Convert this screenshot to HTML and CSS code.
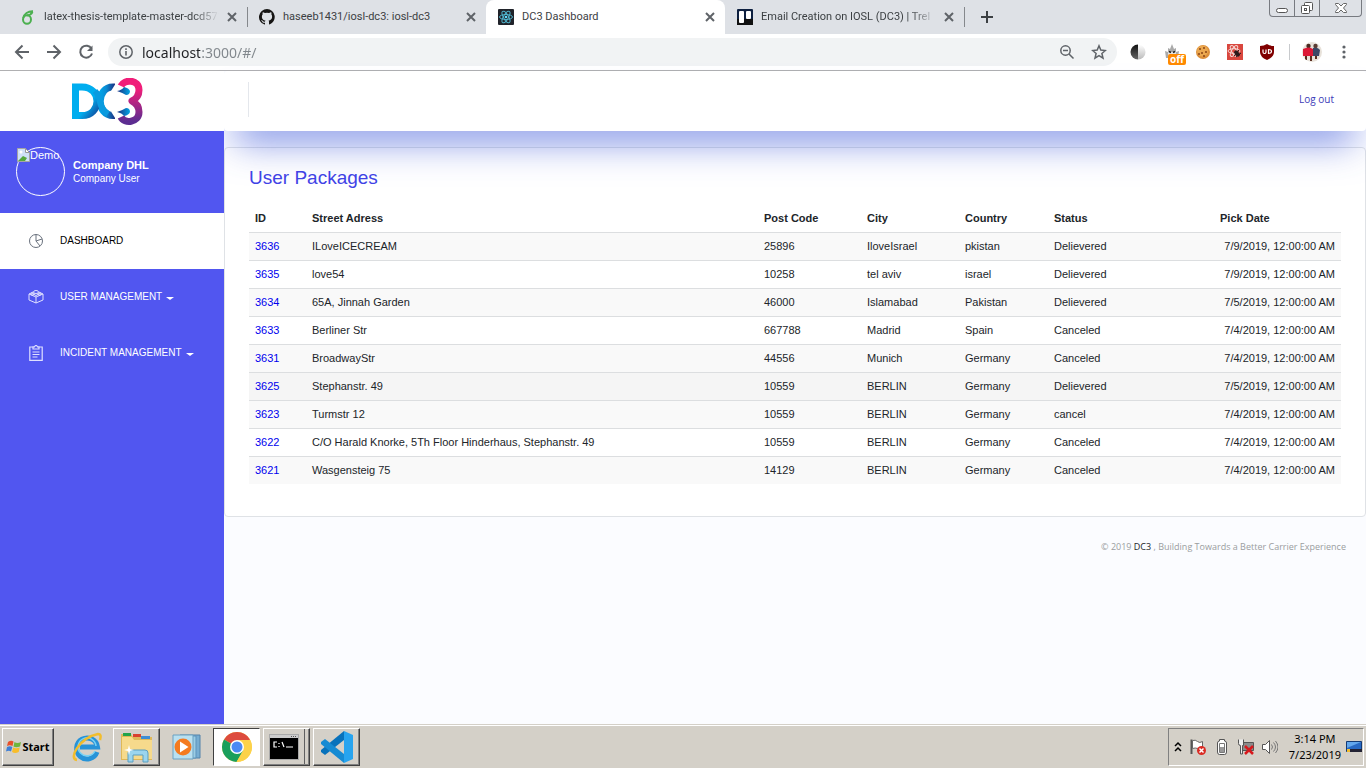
FILE: index.html
```
<!DOCTYPE html>
<html lang="en">
<head>
<meta charset="utf-8">
<title>DC3 Dashboard</title>
<link rel="stylesheet" href="styles.css">
</head>
<body>
<header class="browser">
  <div class="tabstrip">
    <div class="tab">
      <svg class="fav" viewBox="0 0 16 16" fill="none" stroke="#4cb050" stroke-width="2"><ellipse cx="7" cy="10.500" rx="4" ry="4.200"/><path d="M3.300 9C4 5 8 2 13 2.200M7 6.200Q10.500 6.500 12.500 3"/></svg>
      <span class="tab-title fade">latex-thesis-template-master-dcd571</span>
      <button class="close" aria-label="Close tab"><svg viewBox="0 0 10 10"><path d="M1 1l8 8M9 1l-8 8"/></svg></button>
    </div>
    <div class="tab sep-left">
      <svg class="fav" viewBox="0 0 16 16"><path fill="#161514" d="M8 0a8 8 0 0 0-2.500 15.600c.4.100.5-.2.500-.4v-1.500c-2.200.5-2.700-1-2.700-1-.4-.9-.9-1.200-.9-1.200-.7-.5.100-.5.100-.5.800.1 1.200.8 1.200.8.700 1.300 1.900.9 2.300.7.100-.5.300-.9.500-1.100-1.800-.2-3.600-.9-3.600-4 0-.9.300-1.600.8-2.100-.1-.2-.4-1 .1-2.100 0 0 .7-.2 2.200.8a7.600 7.600 0 0 1 4 0c1.500-1 2.200-.8 2.200-.8.500 1.100.2 1.900.1 2.100.5.600.8 1.300.8 2.100 0 3.100-1.900 3.800-3.600 4 .3.300.5.700.5 1.500v2.200c0 .2.100.5.500.4A8 8 0 0 0 8 0z"/></svg>
      <span class="tab-title">haseeb1431/iosl-dc3: iosl-dc3</span>
      <button class="close" aria-label="Close tab"><svg viewBox="0 0 10 10"><path d="M1 1l8 8M9 1l-8 8"/></svg></button>
    </div>
    <div class="tab active">
      <svg class="fav" viewBox="0 0 16 16"><rect width="16" height="16" rx="1" fill="#20232a"/><g fill="none" stroke="#4fb3cb"><ellipse cx="8" cy="8" rx="6.500" ry="2.500"/><ellipse cx="8" cy="8" rx="6.500" ry="2.500" transform="rotate(60 8 8)"/><ellipse cx="8" cy="8" rx="6.500" ry="2.500" transform="rotate(120 8 8)"/></g><circle cx="8" cy="8" r="1.300" fill="#61dafb"/></svg>
      <span class="tab-title">DC3 Dashboard</span>
      <button class="close" aria-label="Close tab"><svg viewBox="0 0 10 10"><path d="M1 1l8 8M9 1l-8 8"/></svg></button>
    </div>
    <div class="tab">
      <svg class="fav" viewBox="0 0 16 16"><rect width="16" height="16" rx="1" fill="#0e2040"/><path d="M0 10h16v6H0z" fill="#111"/><rect x="2" y="2" width="5" height="12" rx="1" fill="#fff"/><rect x="9" y="2" width="5" height="8" rx="1" fill="#fff"/></svg>
      <span class="tab-title fade">Email Creation on IOSL (DC3) | Trel</span>
      <button class="close" aria-label="Close tab"><svg viewBox="0 0 10 10"><path d="M1 1l8 8M9 1l-8 8"/></svg></button>
    </div>
    <button class="newtab" aria-label="New tab"><svg width="12" height="12" viewBox="0 0 12 12"><path d="M6 0v12M0 6h12" stroke="#3c4043" stroke-width="2"/></svg></button>
    <div class="wincontrols">
      <button aria-label="Minimize"><svg width="12" height="16" viewBox="0 0 12 16"><rect x=".5" y="8.500" width="11" height="4" rx="2" fill="#fff" stroke="#555"/></svg></button>
      <button aria-label="Restore"><svg width="14" height="16" viewBox="0 0 14 16" fill="#fff" stroke="#555"><rect x="4.500" y="2.500" width="8" height="8" rx="1"/><rect x="1.500" y="5.500" width="8" height="8" rx="1"/><rect x="4.500" y="8.500" width="2" height="2"/></svg></button>
      <button class="wide" aria-label="Close window"><svg width="12" height="16" viewBox="0 0 12 16"><path d="M.5 3.500h3L6 6l2.500-2.500h3v1L8.500 8l3 3.500v1h-3L6 10l-2.500 2.500h-3v-1l3-3.500-3-3.500z" fill="#fff" stroke="#666"/></svg></button>
    </div>
  </div>
  <div class="toolbar">
    <nav class="nav-buttons">
      <button aria-label="Back"><svg viewBox="0 0 16 16"><path d="M15 8H2M8.500 1.500L2 8l6.500 6.500"/></svg></button>
      <button aria-label="Forward"><svg viewBox="0 0 16 16"><path d="M1 8h13M7.500 1.500L14 8l-6.500 6.500"/></svg></button>
      <button aria-label="Reload"><svg viewBox="0 0 16 16"><path d="M13.500 4.700A6 6 0 1 0 14 9.500"/><path d="M14.500 1.500v5.500H9z" fill="#5f6368" stroke="none"/></svg></button>
    </nav>
    <div class="omnibox">
      <svg class="info" viewBox="0 0 16 16" fill="none" stroke="#5f6368"><circle cx="8" cy="8" r="6.200" stroke-width="1.500"/><path d="M8 7v4.500M8 4.300v1.600" stroke-width="1.600"/></svg>
      <input class="url" type="text" aria-label="Address" value="localhost:3000/#/">
      <button aria-label="Zoom"><svg viewBox="0 0 16 16" class="thin"><circle cx="6.500" cy="6.500" r="4.700"/><path d="M10 10l4.500 4.500M4 6.500h5"/></svg></button>
      <button aria-label="Bookmark"><svg viewBox="0 0 16 16" class="thin"><path d="M8 1.800l1.800 4.300 4.600.4-3.500 3 1.100 4.600L8 11.600l-4 2.500 1.100-4.600-3.500-3 4.600-.4z"/></svg></button>
    </div>
    <div class="extensions">
      <button aria-label="Dark mode"><svg viewBox="0 0 16 16"><defs><linearGradient id="moon" x1="0" y1="0" x2="0" y2="1"><stop stop-color="#111"/><stop offset="1" stop-color="#666"/></linearGradient><linearGradient id="moon2" x1="0" y1="0" x2="0" y2="1"><stop stop-color="#fff"/><stop offset="1" stop-color="#bbb"/></linearGradient></defs><path d="M8 .500a7.500 7.500 0 0 0 0 15z" fill="url(#moon)"/><path d="M8 .500a7.500 7.500 0 0 1 0 15z" fill="url(#moon2)"/></svg></button>
      <button class="badged" aria-label="Extension off"><svg viewBox="0 0 16 16"><path d="M2 14L1 7l3 1 0-4 2 1 2-5 2 5 2-1v4l3-1-1 7z" fill="#aaa"/><path d="M4 8h8v6H4z" fill="#e4e4e4"/><path d="M5 7.500l2 1M11 7.500l-2 1" stroke="#222" stroke-width="1.500"/></svg><span class="badge">off</span></button>
      <button aria-label="Cookies"><svg viewBox="0 0 16 16"><circle cx="8" cy="8" r="7" fill="#dc8f3a"/><circle cx="7.500" cy="7" r="5.500" fill="#eba84f"/><g fill="#8a4314"><circle cx="5" cy="5" r="1"/><circle cx="9" cy="4" r="1"/><circle cx="11" cy="8" r="1"/><circle cx="7" cy="9" r="1"/><circle cx="4" cy="10" r="1"/><circle cx="9" cy="12" r="1"/></g></svg></button>
      <button aria-label="React tools"><svg viewBox="0 0 16 16"><rect width="16" height="16" fill="#d9473e"/><g fill="none" stroke="#f5d6d2"><ellipse cx="7" cy="7" rx="6" ry="2.300"/><ellipse cx="7" cy="7" rx="6" ry="2.300" transform="rotate(60 7 7)"/><ellipse cx="7" cy="7" rx="6" ry="2.300" transform="rotate(120 7 7)"/></g><ellipse cx="10" cy="9.500" rx="2" ry="3.500" transform="rotate(-35 10 9.500)" fill="#2a1a1a"/><path d="M7 8l6 3M12 6l-5 6M9 13l5-4" stroke="#2a1a1a"/></svg></button>
      <button aria-label="Ad blocker"><svg viewBox="0 0 16 16"><path d="M8 0Q11 2 15 2v6q0 5-7 8-7-3-7-8V2q4 0 7-2z" fill="#800000"/><path d="M4 5.500v2.500a1.500 1.500 0 0 0 3 0v-2.500M9.500 5.500v4q3 0 3-2 0-2-3-2z" fill="none" stroke="#fff" stroke-width="1.200"/></svg></button>
    </div>
    <button class="avatar" aria-label="Profile"><svg viewBox="0 0 20 20"><defs><clipPath id="av"><circle cx="10" cy="10" r="10"/></clipPath></defs><g clip-path="url(#av)"><rect width="20" height="20" fill="#e8e2da"/><circle cx="6.500" cy="4" r="2.200" fill="#4a2a22"/><circle cx="13.500" cy="4" r="2.200" fill="#5a3d33"/><path d="M1 7q6-3 10 0v7H1z" fill="#dc1835"/><path d="M11 6q5-1 7 2l-1 6h-6z" fill="#3b4765"/><path d="M3 14h2v4H3zM8 14h2v5H8zM13 14h2v3h-2z" fill="#5a2d20"/></g></svg></button>
    <button class="menu" aria-label="Menu"><svg viewBox="0 0 16 16" fill="#5f6368"><circle cx="8" cy="3" r="1.600"/><circle cx="8" cy="8" r="1.600"/><circle cx="8" cy="13" r="1.600"/></svg></button>
  </div>
</header>

<div class="app">
  <aside class="sidebar">
    <a class="brand" href="#/" aria-label="DC3">
      <svg width="72" height="47" viewBox="0 0 72 47" fill="none">
        <defs>
          <linearGradient id="d" x1="0" y1="0" x2="1" y2="1"><stop offset=".6" stop-color="#00adef"/><stop offset="1" stop-color="#124a9c"/></linearGradient>
          <linearGradient id="c" x1="0" x2="1"><stop stop-color="#00a4e8"/><stop offset=".4" stop-color="#0b8bd3"/><stop offset="1" stop-color="#1a2f80"/></linearGradient>
          <linearGradient id="t" x1="0" y1="0" x2="0" y2="1"><stop offset=".2" stop-color="#f01e79"/><stop offset="1" stop-color="#5c2d91"/></linearGradient>
          <linearGradient id="l" x1="0" x2="1"><stop stop-color="#1b2e80"/><stop offset="1" stop-color="#00a5e5"/></linearGradient>
        </defs>
        <path d="M43 9H41C24 9 24 37.500 41 37.500H43" stroke="url(#c)" stroke-width="7"/>
        <path d="M3.500 9H10C30 9 30 37.500 10 37.500H3.500Z" stroke="url(#d)" stroke-width="7"/>
        <path d="M23 13Q27 17 28 24T36 36" stroke="#0a9bdf" stroke-width="6"/>
        <path d="M49 8C52 1 67 1 67 12C67 18 64 21 60 23C64 25 67 28 67 34C67 45 52 46 49 39" stroke="url(#t)" stroke-width="7" stroke-linejoin="round"/>
        <path d="M39 13l5-8 4 7 0 2zM39 33.500l5 8 4-7 0-2z" fill="#fff"/>
        <path d="M45 13q5-1 7-4 5 1 6 4 0 4-4 4-3-2-9-4zM45 34q5 1 7 4 5-1 6-4 0-4-4-4-3 2-9 4z" fill="url(#l)"/>
      </svg>
    </a>
    <div class="profile">
      <div class="photo"><svg width="13" height="14" viewBox="0 0 13 14"><path d="M.5.500h8l4 4v9H.5z" fill="#cfe0f8" stroke="#a4a4a4"/><path d="M8.500.500v4h4z" fill="#fff" stroke="#999"/><path d="M1 13l5-5 4 2-2 3z" fill="#54a83c"/><circle cx="4" cy="4" r="1.500" fill="#fff"/></svg><span>Demo</span></div>
      <div class="who"><strong>Company DHL</strong><span>Company User</span></div>
    </div>
    <nav class="menu-list">
      <a class="item current" href="#/"><svg viewBox="0 0 16 16" fill="none" stroke="#69717d"><circle cx="8" cy="8" r="6.500"/><path d="M8 1.500V8l4 5M8 8l6-2"/></svg>DASHBOARD</a>
      <a class="item" href="#/users"><svg viewBox="0 0 16 16" fill="none" stroke="#dfe0ff"><path d="M1 5l7 3 7-3v6l-7 3-7-3zM8 8v6M1 5l4-2M15 5l-4-2M4 4.500l4 2 4-2"/><ellipse cx="8" cy="3" rx="2.500" ry="1.500"/><ellipse cx="4.500" cy="5" rx="2" ry="1"/><ellipse cx="11.500" cy="5" rx="2" ry="1"/></svg>USER MANAGEMENT<i class="caret"></i></a>
      <a class="item" href="#/incidents"><svg viewBox="0 0 16 16" fill="none" stroke="#dfe0ff" stroke-width="1.200"><path d="M5 2H1.800v13.300h12.400V2H11M5 1.800h1.500Q8-.8 9.500 1.800H11V4H5zM4.500 7h7M4.500 9.500h7M4.500 12h5"/></svg>INCIDENT MANAGEMENT<i class="caret"></i></a>
    </nav>
  </aside>
  <div class="content">
    <div class="topbar"><span class="divider"></span><a href="#/logout">Log out</a></div>
    <main class="card">
      <h1>User Packages</h1>
      <table>
        <colgroup><col class="c-id"><col><col class="c-post"><col class="c-city"><col class="c-country"><col class="c-status"><col class="c-date"></colgroup>
        <thead><tr><th>ID</th><th>Street Adress</th><th>Post Code</th><th>City</th><th>Country</th><th>Status</th><th>Pick Date</th></tr></thead>
        <tbody>
          <tr><td><a href="#/3636">3636</a></td><td>ILoveICECREAM</td><td>25896</td><td>IloveIsrael</td><td>pkistan</td><td>Delievered</td><td>7/9/2019, 12:00:00 AM</td></tr>
          <tr><td><a href="#/3635">3635</a></td><td>love54</td><td>10258</td><td>tel aviv</td><td>israel</td><td>Delievered</td><td>7/9/2019, 12:00:00 AM</td></tr>
          <tr><td><a href="#/3634">3634</a></td><td>65A, Jinnah Garden</td><td>46000</td><td>Islamabad</td><td>Pakistan</td><td>Delievered</td><td>7/5/2019, 12:00:00 AM</td></tr>
          <tr><td><a href="#/3633">3633</a></td><td>Berliner Str</td><td>667788</td><td>Madrid</td><td>Spain</td><td>Canceled</td><td>7/4/2019, 12:00:00 AM</td></tr>
          <tr><td><a href="#/3631">3631</a></td><td>BroadwayStr</td><td>44556</td><td>Munich</td><td>Germany</td><td>Canceled</td><td>7/4/2019, 12:00:00 AM</td></tr>
          <tr class="hovered"><td><a href="#/3625">3625</a></td><td>Stephanstr. 49</td><td>10559</td><td>BERLIN</td><td>Germany</td><td>Delievered</td><td>7/5/2019, 12:00:00 AM</td></tr>
          <tr><td><a href="#/3623">3623</a></td><td>Turmstr 12</td><td>10559</td><td>BERLIN</td><td>Germany</td><td>cancel</td><td>7/4/2019, 12:00:00 AM</td></tr>
          <tr><td><a href="#/3622">3622</a></td><td>C/O Harald Knorke, 5Th Floor Hinderhaus, Stephanstr. 49</td><td>10559</td><td>BERLIN</td><td>Germany</td><td>Canceled</td><td>7/4/2019, 12:00:00 AM</td></tr>
          <tr><td><a href="#/3621">3621</a></td><td>Wasgensteig 75</td><td>14129</td><td>BERLIN</td><td>Germany</td><td>Canceled</td><td>7/4/2019, 12:00:00 AM</td></tr>
        </tbody>
      </table>
    </main>
    <footer class="foot">© 2019 <a href="#/">DC3</a> , Building Towards a Better Carrier Experience</footer>
  </div>
</div>

<footer class="taskbar">
  <button class="task start"><svg width="16" height="16" viewBox="0 0 16 16"><path d="M2 3q3-2 5.500-.5L6.500 7Q4 5.500 1 7z" fill="#e8502a"/><path d="M8.500 3Q11 5 15 3l-1 4.500Q10 9 7.500 7.500z" fill="#6fb63c"/><path d="M1 8q3-1.500 5.300 0L5 12.500Q3 11 0 12.500z" fill="#3f7fd6"/><path d="M7.200 8.500Q10 10 13.700 8.500l-1 4.500Q9 15 6 13z" fill="#f8bd2a"/></svg>Start</button>
  <button class="task flat" aria-label="Internet Explorer"><svg width="32" height="32" viewBox="0 0 32 32" fill="none"><path d="M26 21A10.500 10.500 0 1 1 26.500 16H9" stroke="#2793d8" stroke-width="5"/><path d="M24 20A9 9 0 1 1 25 15" stroke="#77d2f5" stroke-width="1.500"/><path d="M6 29C-3 28 8 7 27 3q4 0 2 6" stroke="#f2bd2c" stroke-width="2.500"/></svg></button>
  <button class="task" aria-label="Explorer"><svg width="34" height="32" viewBox="0 0 34 32"><path d="M1 3h10l2 3h19v23H1z" fill="#dfb857"/><path d="M3 2h8v3H3z" fill="#23a44a"/><path d="M13 3h8v3h-8z" fill="#d9412d"/><path d="M21 5h9v3h-9z" fill="#3c8dd5"/><path d="M2 6h10l2 3h18v19H2z" fill="#f8dd87"/><path d="M2 9h30v19H2z" fill="#f6da8c"/><path d="M8 31V22q0-3 3-3h14q3 0 3 3v9h-5v-7H13v7z" fill="#9bd5ee" stroke="#5b9fc1"/><path d="M9 14l1 4 4 1-4 1-1 4-1-4-4-1 4-1z" fill="#fff"/></svg></button>
  <button class="task flat" aria-label="Media Player"><svg width="30" height="30" viewBox="0 0 30 30"><path d="M8 3h20v23H8z" fill="#76add2" stroke="#5382a9"/><path d="M5 4h19v22H5z" fill="#9bcde5" stroke="#5d93bb"/><path d="M1 3h20v24H1z" fill="#b9e0f0" stroke="#6aa1c2"/><circle cx="11" cy="15" r="8.500" fill="#f47b20"/><path d="M8 9.500l8.500 5.500L8 20.500z" fill="#fff"/></svg></button>
  <button class="task pressed" aria-label="Chrome"><svg width="32" height="32" viewBox="0 0 32 32"><circle cx="16" cy="16" r="15" fill="#fcd24a"/><path d="M16 16L3 8.500A15 15 0 0 1 29 8.500z" fill="#dd4b3e"/><path d="M3 8.500A15 15 0 0 0 15.500 31L22.500 19.500 16 16z" fill="#1a9f5c"/><path d="M16 9h13.200A15 15 0 0 1 15.500 31l6.500-11.500z" fill="#fcd24a"/><circle cx="16" cy="16" r="7" fill="#fff"/><circle cx="16" cy="16" r="5.500" fill="#4a8af4"/></svg></button>
  <button class="task stacked" aria-label="Command prompt"><svg width="30" height="26" viewBox="0 0 30 26"><rect x=".5" y=".5" width="29" height="25" fill="#000" stroke="#aaa"/><path d="M1 1h28v3H1z" fill="#ccc"/><path d="M22 2.500h6" stroke="#555" stroke-dasharray="1 1"/><path d="M8 8H5v5h3M10 9v1M10 12v1M13 8l2 5M17 13h7" fill="none" stroke="#fff" stroke-width="1.200"/></svg></button>
  <button class="task" aria-label="Code editor"><svg width="34" height="34" viewBox="0 0 34 34"><path d="M24 1l9 4v24l-9 4z" fill="#27a4ef"/><path d="M24 1v9L5 25l-4-3v-2z" fill="#0872bb"/><path d="M24 33v-9L5 9l-4 3v2z" fill="#168bd3"/></svg></button>
  <div class="tray">
    <svg width="8" height="12" viewBox="0 0 8 12" fill="none" stroke="#000" stroke-width="1.500"><path d="M1 5l3-3 3 3M1 10l3-3 3 3"/></svg>
    <svg class="tray-icon" viewBox="0 0 16 16"><path d="M1.500 15V.5" stroke="#555" stroke-width="2"/><path d="M2.500 1.500q3-1 5 1t5 0v7q-3 1-5 0t-5 0z" fill="#fff" stroke="#666"/><circle cx="11.500" cy="11.500" r="4.500" fill="#d92b24"/><path d="M9.500 9.500l4 4m0-4l-4 4" stroke="#fff" stroke-width="1.500"/></svg>
    <svg class="tray-icon" viewBox="0 0 16 16"><path d="M5.500 2V.5h5V2q2 0 2 2v9q0 2.500-2 2.500h-5q-2 0-2-2.500V4q0-2 2-2z" fill="#fff" stroke="#555"/><path d="M5.500 4.500h5v9h-5z" fill="#fff" stroke="#777"/><path d="M6 8h4v5H6z" fill="#999"/></svg>
    <svg class="tray-icon" viewBox="0 0 16 16"><path d="M4.500 3.500h11v8h-11z" fill="#8b8b8b" stroke="#555"/><path d="M.5.500v4q0 2 2 2V15h2V6.500h1V.500" fill="#eee" stroke="#555"/><path d="M7 7l8 8m0-8l-8 8" stroke="#d8181c" stroke-width="2.500"/></svg>
    <svg class="tray-icon" viewBox="0 0 16 16" fill="none" stroke="#777"><path d="M.5 5.500h3l4-4v13l-4-4h-3z" fill="#fff" stroke="#555"/><path d="M9.500 5.500q2 2.500 0 5M11.500 3.500q4 4.500 0 9M13.500 2q5 6 0 12"/></svg>
    <div class="clock"><span>3:14 PM</span><span>7/23/2019</span></div>
    <svg class="tray-icon" viewBox="0 0 16 16"><path d="M.5 2.500h15v10H.5z" fill="#2769c4" stroke="#123a75"/><path d="M1 3h14L1 9z" fill="#62a7ed"/><path d="M4 10h12v3H4z" fill="#223"/><path d="M1 10h3v3H1z" fill="#f2bd2c"/></svg>
  </div>
</footer>
</body>
</html>
```
FILE: styles.css
```
* { box-sizing: border-box; }

body {
  margin: 0;
  min-height: 100vh;
  display: flex;
  flex-direction: column;
  background: #fbfcff;
  color: #212529;
  font: 11px/16px "Liberation Sans", Arial, sans-serif;
}

button {
  padding: 0;
  border: 0;
  background: none;
  font: inherit;
  color: inherit;
  display: flex;
  align-items: center;
  justify-content: center;
}

a { text-decoration: none; }
svg { flex: none; display: block; }

/* Browser window */
.browser {
  border-bottom: 1px solid #b0b0b2;
  background: #fff;
}

.tabstrip {
  display: flex;
  align-items: center;
  height: 34px;
  padding-left: 8px;
  background: #dee1e6;
}

.tab {
  display: flex;
  align-items: center;
  gap: 8px;
  flex: 0 1 239px;
  min-width: 0;
  height: 34px;
  padding: 0 10px 0 12px;
  color: #3c4043;
  font-family: Roboto, sans-serif;
}

.tab.active { background: #fff; border-radius: 8px 8px 0 0; }

.sep-left {
  background: linear-gradient(#85888c, #85888c) left center / 1px 20px no-repeat;
}

.fav { width: 16px; height: 16px; }

.tab-title {
  flex: 1;
  min-width: 0;
  overflow: hidden;
  white-space: nowrap;
}

.fade { mask-image: linear-gradient(to right, #000 85%, transparent); }

.close svg { width: 10px; height: 10px; stroke: #5f6368; stroke-width: 2; }

.newtab {
  width: 45px;
  height: 34px;
  background: linear-gradient(#85888c, #85888c) left center / 1px 20px no-repeat;
}

.wincontrols {
  display: flex;
  align-self: flex-start;
  margin-left: auto;
  margin-right: 4px;
  border: 1px solid #777a80;
  border-top: 0;
  border-radius: 0 0 4px 4px;
}

.wincontrols button { width: 25px; height: 16px; border-right: 1px solid #777a80; }
.wincontrols .wide { width: 41px; border-right: 0; }

.toolbar {
  display: flex;
  align-items: center;
  height: 36px;
  padding-right: 14px;
}

.nav-buttons { display: flex; gap: 16px; padding: 0 14px; }

.toolbar button svg { width: 16px; height: 16px; }

.nav-buttons svg, .omnibox button svg {
  fill: none;
  stroke: #5f6368;
  stroke-width: 2;
}

.omnibox button .thin { stroke-width: 1.5; }

.omnibox {
  flex: 1;
  display: flex;
  align-items: center;
  gap: 8px;
  height: 28px;
  padding: 0 10px;
  border-radius: 14px;
  background: #f1f3f4;
}

.omnibox button + button { margin-left: 8px; }
.info { width: 16px; height: 16px; }

.url {
  flex: 1;
  min-width: 0;
  height: 24px;
  padding: 0;
  border: 0;
  outline: 0;
  font: 14px/20px "Noto Sans", sans-serif;
  color: transparent;
  background: linear-gradient(to right, #202124 58px, #80868b 58px);
  background-clip: text;
}

.extensions {
  display: flex;
  gap: 16px;
  padding: 0 14px 0 13px;
  border-right: 1px solid #c8cacd;
}

.badged { position: relative; margin: 0 0 0 2px; }
.badged + button { margin-left: -1px; }

.badge {
  position: absolute;
  left: 4px;
  top: 10px;
  padding: 0 2px;
  border-radius: 2px;
  background: #ff8a00;
  color: #fff;
  font: bold 10px/11px "Noto Sans", sans-serif;
}

.toolbar .avatar { margin: 0 14px 0 12px; }
.toolbar .avatar svg { width: 20px; height: 20px; }

/* Application */
.app { flex: 1; display: flex; }

.sidebar {
  flex: none;
  width: 224px;
  position: relative;
  z-index: 2;
  background: #5156f0;
  color: #fff;
}

.brand {
  display: flex;
  align-items: center;
  height: 60px;
  padding-left: 72px;
  background: #fff;
}

.profile {
  display: flex;
  align-items: center;
  gap: 8px;
  padding: 16px 16px 17px;
}

.photo {
  display: flex;
  align-items: flex-start;
  width: 49px;
  height: 49px;
  border: 1px solid #fff;
  border-radius: 50%;
  line-height: 14px;
}

.who { display: flex; flex-direction: column; line-height: 14px; }
.who span { font-size: 10px; }

.item {
  display: flex;
  align-items: center;
  height: 56px;
  padding-left: 28px;
  color: #fff;
  font-size: 10px;
}

.item svg { width: 16px; height: 16px; margin-right: 16px; }
.item.current { background: #fff; color: #000; }

.caret {
  margin: 2px 0 0 4px;
  border: 4px solid transparent;
  border-top: 3px solid #fff;
  border-bottom: 0;
}

.content { flex: 1; min-width: 0; }

.topbar {
  position: relative;
  z-index: 1;
  display: flex;
  align-items: center;
  justify-content: space-between;
  height: 60px;
  padding: 0 32px 4px 24px;
  margin-bottom: 16px;
  background: #fff;
  border-radius: 4px;
  box-shadow: 0 24px 36px -12px rgba(60, 85, 215, 0.62);
  font-family: "Open Sans", sans-serif;
  font-size: 10px;
}

.topbar a { color: #3b3bb8; }
.divider { width: 1px; height: 35px; background: #e4e7ec; }

.card {
  padding: 18px 24px 32px;
  background: #fff;
  border: 1px solid #dfe2e6;
  border-radius: 4px;
}

h1 {
  margin: 0 0 14px;
  color: #4143e6;
  font-size: 19px;
  line-height: 24px;
  font-weight: normal;
}

table { width: 100%; border-collapse: collapse; table-layout: fixed; }

th, td {
  height: 28px;
  padding: 0 6px;
  text-align: left;
  white-space: nowrap;
}

td { border-top: 1px solid #dcdee0; }
td:last-child { text-align: right; }
td a { color: #0000ee; }
tbody tr:nth-child(odd) { background: #f9f9f9; }
tbody .hovered { background: #f5f5f5; }

.c-id { width: 57px; }
.c-post { width: 103px; }
.c-city { width: 98px; }
.c-country { width: 89px; }
.c-status { width: 166px; }
.c-date { width: 127px; }

.foot {
  padding: 22px 20px;
  text-align: right;
  color: #9a9ca0;
  font-family: "Open Sans", sans-serif;
  font-size: 9px;
}

.foot a { color: #212529; }

/* Taskbar */
.taskbar {
  display: flex;
  align-items: center;
  gap: 3px;
  height: 44px;
  padding: 0 2px;
  border-top: 1px solid #d4d0c8;
  box-shadow: inset 0 1px #fff;
  background: #d4d0c8;
  color: #000;
}

.task {
  width: 47px;
  height: 38px;
  border: 1px solid;
  border-color: #fff #404040 #404040 #fff;
  box-shadow: inset -1px -1px #808080;
}

.task.start {
  width: 52px;
  margin-right: 6px;
  font: bold 11px/16px "Noto Sans", sans-serif;
}

.task.flat { border-color: transparent; box-shadow: none; }
.task.pressed { background: #fff; border-color: #404040 #fff #fff #404040; box-shadow: none; }
.task.stacked { padding-right: 5px; box-shadow: inset -1px -1px #808080, inset -4px 0 #d4d0c8, inset -5px 0 #606060; }

.tray {
  display: flex;
  align-items: center;
  gap: 8px;
  height: 38px;
  margin-left: auto;
  padding: 0 1px 0 5px;
  border: 1px solid;
  border-color: #808080 #fff #fff #808080;
}

.tray-icon { width: 16px; height: 16px; }

.clock {
  display: flex;
  flex-direction: column;
  align-items: center;
  margin: 0 -3px 0 3px;
  font-family: "Noto Sans", sans-serif;
}
```
